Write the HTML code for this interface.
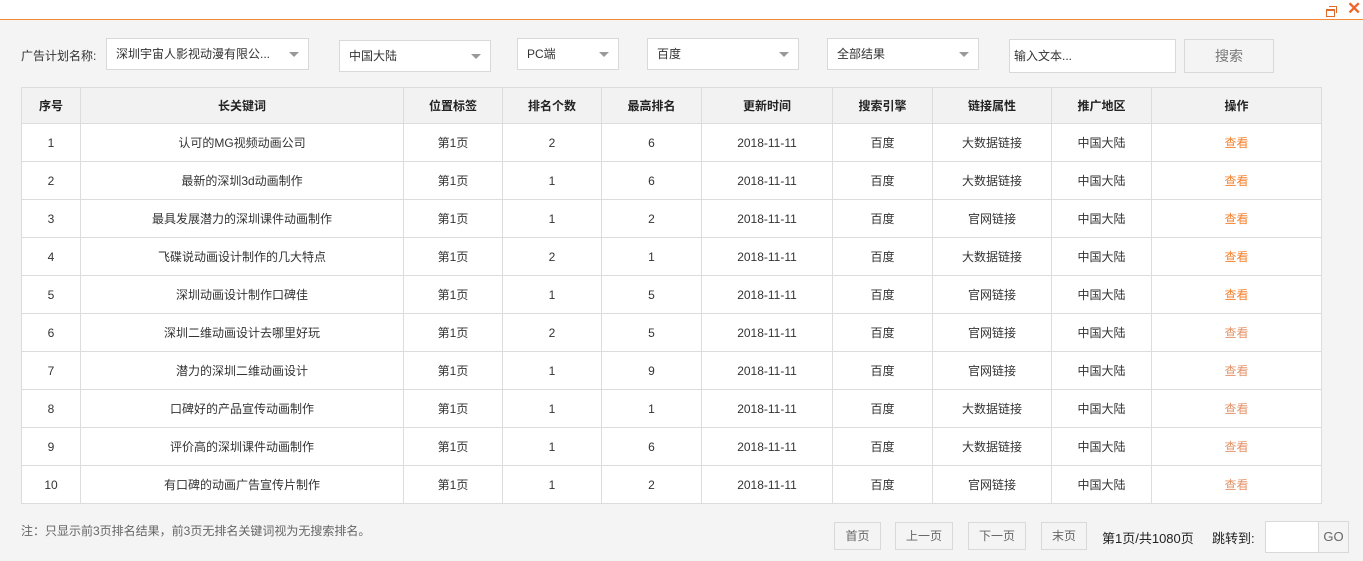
<!DOCTYPE html><html><head><meta charset="utf-8"><style>
*{box-sizing:border-box;margin:0;padding:0}
body{width:1363px;height:561px;background:#f4f4f4;font-family:"Liberation Sans","Noto Sans CJK SC",sans-serif;font-size:12px;color:#333;position:relative;overflow:hidden}
.top{position:absolute;left:0;top:0;width:1363px;height:19px;background:#fff}
.line{position:absolute;left:0;top:19px;width:1363px;height:1px;background:#f5893a}
.a{position:absolute}
.sel{position:absolute;background:#fff;border:1px solid #d9d9d9;height:32px;line-height:30px;padding-left:9px;font-size:12px;color:#333}
.sel.dd:after{content:"";position:absolute;right:9px;top:13px;border-left:5px solid transparent;border-right:5px solid transparent;border-top:5px solid #999}
table{position:absolute;left:21px;top:87px;border-collapse:collapse;background:#fff;width:1301px}
td,th{border:1px solid #dcdcdc;text-align:center;height:38px;font-size:12px;padding:0;line-height:12px}
th{background:#f2f2f2;font-weight:bold;height:36px;color:#222}
.o{color:#f5822f}.p{color:#e3936a}
.btn{position:absolute;top:522px;height:28px;border:1px solid #d9d9d9;background:#f4f4f4;color:#666;text-align:center;line-height:26px}
</style></head><body>
<div class="top"></div><div class="line"></div>
<div class="a" style="left:1326px;top:9px;width:9px;height:8px;border:1px solid #e06a2a;border-top-width:2px"></div>
<div class="a" style="left:1329px;top:6px;width:8px;height:7px;border-top:1px solid #e06a2a;border-right:1px solid #e06a2a"></div>
<div class="a" style="left:1347px;top:0px;color:#f0642a;font-size:17px;font-weight:bold;line-height:18px">✕</div>
<div class="a" style="left:21px;top:47px">广告计划名称:</div>
<div class="sel dd" style="left:106px;top:38px;width:203px">深圳宇宙人影视动漫有限公...</div>
<div class="sel dd" style="left:339px;top:40px;width:152px">中国大陆</div>
<div class="sel dd" style="left:517px;top:38px;width:102px">PC端</div>
<div class="sel dd" style="left:647px;top:38px;width:152px">百度</div>
<div class="sel dd" style="left:827px;top:38px;width:152px">全部结果</div>
<div class="sel" style="left:1009px;top:39px;width:167px;height:34px;line-height:32px;padding-left:4px">输入文本...</div>
<div class="a" style="left:1184px;top:39px;width:90px;height:34px;border:1px solid #d9d9d9;text-align:center;line-height:32px;color:#777;font-size:14px">搜索</div>
<table>
<tr><th style="width:59px">序号</th><th style="width:323px">长关键词</th><th style="width:99px">位置标签</th><th style="width:99px">排名个数</th><th style="width:100px">最高排名</th><th style="width:131px">更新时间</th><th style="width:100px">搜索引擎</th><th style="width:119px">链接属性</th><th style="width:100px">推广地区</th><th>操作</th></tr>
<tr><td>1</td><td>认可的MG视频动画公司</td><td>第1页</td><td>2</td><td>6</td><td>2018-11-11</td><td>百度</td><td>大数据链接</td><td>中国大陆</td><td class="o">查看</td></tr>
<tr><td>2</td><td>最新的深圳3d动画制作</td><td>第1页</td><td>1</td><td>6</td><td>2018-11-11</td><td>百度</td><td>大数据链接</td><td>中国大陆</td><td class="o">查看</td></tr>
<tr><td>3</td><td>最具发展潜力的深圳课件动画制作</td><td>第1页</td><td>1</td><td>2</td><td>2018-11-11</td><td>百度</td><td>官网链接</td><td>中国大陆</td><td class="o">查看</td></tr>
<tr><td>4</td><td>飞碟说动画设计制作的几大特点</td><td>第1页</td><td>2</td><td>1</td><td>2018-11-11</td><td>百度</td><td>大数据链接</td><td>中国大陆</td><td class="o">查看</td></tr>
<tr><td>5</td><td>深圳动画设计制作口碑佳</td><td>第1页</td><td>1</td><td>5</td><td>2018-11-11</td><td>百度</td><td>官网链接</td><td>中国大陆</td><td class="o">查看</td></tr>
<tr><td>6</td><td>深圳二维动画设计去哪里好玩</td><td>第1页</td><td>2</td><td>5</td><td>2018-11-11</td><td>百度</td><td>官网链接</td><td>中国大陆</td><td class="p">查看</td></tr>
<tr><td>7</td><td>潜力的深圳二维动画设计</td><td>第1页</td><td>1</td><td>9</td><td>2018-11-11</td><td>百度</td><td>官网链接</td><td>中国大陆</td><td class="p">查看</td></tr>
<tr><td>8</td><td>口碑好的产品宣传动画制作</td><td>第1页</td><td>1</td><td>1</td><td>2018-11-11</td><td>百度</td><td>大数据链接</td><td>中国大陆</td><td class="p">查看</td></tr>
<tr><td>9</td><td>评价高的深圳课件动画制作</td><td>第1页</td><td>1</td><td>6</td><td>2018-11-11</td><td>百度</td><td>大数据链接</td><td>中国大陆</td><td class="p">查看</td></tr>
<tr><td>10</td><td>有口碑的动画广告宣传片制作</td><td>第1页</td><td>1</td><td>2</td><td>2018-11-11</td><td>百度</td><td>官网链接</td><td>中国大陆</td><td class="p">查看</td></tr>
</table>
<div class="a" style="left:21px;top:522px;color:#666">注：只显示前3页排名结果，前3页无排名关键词视为无搜索排名。</div>
<div class="btn" style="left:834px;width:47px">首页</div>
<div class="btn" style="left:895px;width:58px">上一页</div>
<div class="btn" style="left:968px;width:58px">下一页</div>
<div class="btn" style="left:1041px;width:46px">末页</div>
<div class="a" style="left:1102px;top:528px;font-size:13px;color:#222">第1页/共1080页</div>
<div class="a" style="left:1212px;top:528px;font-size:13px;color:#222">跳转到:</div>
<div class="a" style="left:1265px;top:521px;width:54px;height:32px;background:#fff;border:1px solid #d9d9d9"></div>
<div class="a" style="left:1318px;top:521px;width:31px;height:32px;border:1px solid #d9d9d9;text-align:center;line-height:30px;color:#666;font-size:13px">GO</div>
</body></html>
